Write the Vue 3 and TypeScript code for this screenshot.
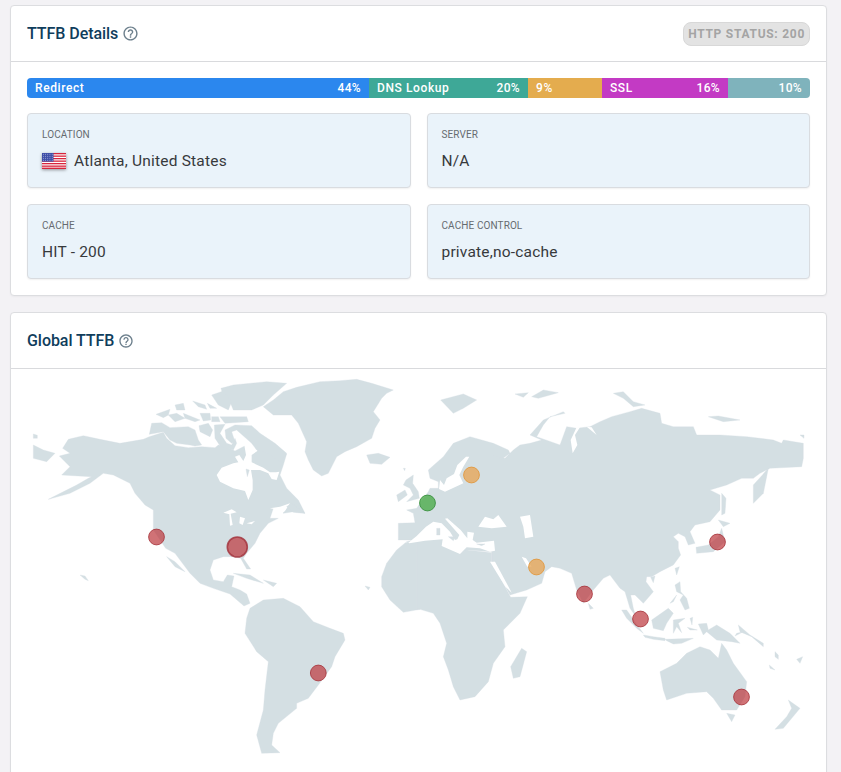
<template>
  <div class="page">
    <section class="card">
      <header class="card-head">
        <div class="card-title">
          <h2>TTFB Details</h2>
          <svg class="help" viewBox="0 0 24 24"><path :d="helpPath" /></svg>
        </div>
        <span class="status">HTTP STATUS: 200</span>
      </header>
      <div class="details">
        <div class="bar">
          <div
            v-for="seg in segments"
            :key="seg.color"
            class="seg"
            :style="{ width: seg.width + 'px', background: seg.color }"
          >
            <span class="seg-label">{{ seg.label }}</span>
            <span v-if="seg.right">{{ seg.right }}</span>
          </div>
        </div>
        <div class="info-grid">
          <div class="info">
            <div class="info-label">LOCATION</div>
            <div class="info-value">
              <svg class="flag" viewBox="0 0 25 16" preserveAspectRatio="none">
                <rect width="25" height="16" fill="#fff" />
                <rect v-for="y in [0, 2.5, 5, 7.5, 10, 12.5]" :key="y" x="0" :y="y" width="25" height="1.3" fill="#d8253c" />
                <rect x="0" y="14.6" width="25" height="1.4" fill="#d8253c" />
                <rect width="12" height="8.6" fill="#3f4fa8" />
                <circle v-for="s in flagStars" :key="s[0] + '-' + s[1]" :cx="s[0]" :cy="s[1]" r="0.45" fill="#dfe3f5" />
              </svg>
              Atlanta, United States
            </div>
          </div>
          <div class="info">
            <div class="info-label">SERVER</div>
            <div class="info-value">N/A</div>
          </div>
          <div class="info">
            <div class="info-label">CACHE</div>
            <div class="info-value">HIT - 200</div>
          </div>
          <div class="info">
            <div class="info-label">CACHE CONTROL</div>
            <div class="info-value">private,no-cache</div>
          </div>
        </div>
      </div>
    </section>

    <section class="card card-map">
      <header class="card-head">
        <div class="card-title">
          <h2>Global TTFB</h2>
          <svg class="help help-small" viewBox="0 0 24 24"><path :d="helpPath" /></svg>
        </div>
      </header>
      <svg class="map" viewBox="11 369 815 403" width="815" height="403">
        <g v-for="layer in layers" :key="layer.at" :transform="`translate(${layer.at}) scale(0.33333)`">
          <polygon v-for="p in layer.land" :key="p" :points="p" class="land" />
          <polygon v-for="p in layer.seas" :key="p" :points="p" class="sea" />
          <polygon v-for="p in layer.isles" :key="p" :points="p" class="land" />
        </g>
        <circle
          v-for="m in markers"
          :key="m.x"
          :cx="m.x"
          :cy="m.y"
          :r="m.r"
          :fill="m.fill"
          :stroke="m.stroke"
          :stroke-width="m.sw"
        />
      </svg>
    </section>
  </div>
</template>

<script setup lang="ts">
const helpPath =
  'M11 18h2v-2h-2v2zm1-16C6.48 2 2 6.48 2 12s4.48 10 10 10 10-4.48 10-10S17.52 2 12 2zm0 18c-4.41 0-8-3.59-8-8s3.59-8 8-8 8 3.59 8 8-3.59 8-8 8zm0-14c-2.21 0-4 1.79-4 4h2c0-1.1.9-2 2-2s2 .9 2 2c0 2-3 1.75-3 5h2c0-2.25 3-2.5 3-5 0-2.21-1.79-4-4-4z'

const segments = [
  { label: 'Redirect', right: '44%', width: 342, color: '#2b87ee' },
  { label: 'DNS Lookup', right: '20%', width: 159, color: '#3ea897' },
  { label: '9%', right: '', width: 74, color: '#e4ac4e' },
  { label: 'SSL', right: '16%', width: 126, color: '#c33ac4' },
  { label: '', right: '10%', width: 82, color: '#7fb3bc' }
]

const flagStars: number[][] = []
for (let row = 0; row < 4; row++) {
  for (let col = 0; col < 5; col++) {
    flagStars.push([1.4 + col * 2.3, 1.3 + row * 2])
  }
}

// map outlines traced from the reference, each layer in 3x crop coordinates
const layers = [
  {
    at: '20 370',
    land: [
      '118,258 150,250 128,235 145,208 190,197 240,208 300,220 370,208 388,200 430,187 440,205 465,227 505,233 545,230 585,233 595,225 620,230 645,243 680,225 760,240 800,252 790,285 780,315 800,355 835,390 840,400 855,430 820,425 790,430 780,415 760,415 750,445 775,445 745,460 720,490 705,520 680,550 670,565 692,597 680,597 662,565 640,560 610,560 580,570 570,600 580,630 610,635 622,615 642,618 635,650 660,660 680,672 690,700 672,708 630,672 580,655 540,640 510,610 465,550 437,535 400,480 400,420 375,405 345,370 330,340 280,315 250,310 210,340 150,370 85,388 170,345 205,325 215,320 175,318 125,315 150,290',
      '40,225 70,240 105,250 80,275 40,265',
      '40,192 52,196 52,205 40,205',
      '730,110 760,90 790,65 830,52 900,35 960,32 1010,28 1055,40 1120,60 1100,70 1085,85 1060,125 1080,150 1065,175 1055,205 1010,230 975,245 950,260 925,310 905,318 880,300 865,270 855,245 860,215 835,160 815,135 760,135',
      '1040,255 1075,250 1110,262 1085,283 1050,280',
      '680,745 690,715 730,690 790,685 840,710 880,755 930,775 970,790 975,810 945,860 935,890 895,945 865,985 830,1000 830,1015 775,1060 760,1090 755,1125 780,1148 725,1150 710,1095 730,1020 735,960 745,875 710,845 675,790',
      '1200,505 1160,515 1130,540 1100,580 1085,620 1085,650 1110,690 1150,727 1200,718'
    ],
    seas: [],
    isles: [
      '640,610 690,615 730,640 680,625',
      '730,630 770,640 760,650',
      '440,560 465,590 495,605 465,575',
      '1035,648 1050,652 1045,660',
      '180,615 195,618 205,632 195,628'
    ]
  },
  {
    at: '420 370',
    land: [
      '-65,510 -65,460 -15,458 -20,430 -40,420 -10,415 0,400 25,365 30,355 55,355 55,335 30,325 25,300 70,260 100,220 150,200 220,220 265,240 270,250 245,268 215,255 255,265 280,240 300,225 330,220 365,210 330,195 370,150 430,125 435,130 390,140 370,165 350,200 420,225 440,170 470,175 510,170 540,155 575,140 630,125 665,115 720,130 725,160 760,170 820,170 830,195 900,195 980,200 1060,210 1085,220 1090,210 1150,220 1150,265 1145,290 1050,295 1020,310 1000,325 965,325 920,345 870,360 900,375 900,420 870,455 825,465 810,485 825,520 805,525 795,500 775,490 760,500 775,515 775,535 782,555 760,585 720,605 695,620 680,620 678,635 700,665 670,700 645,675 632,675 640,715 648,740 630,715 615,665 600,655 570,615 550,625 520,660 490,700 470,660 455,610 420,595 395,590 375,605 365,640 320,660 270,675 215,575 215,545 145,540 120,550 70,520 0,510',
      '0,505 50,505 70,520 120,550 140,540 215,548 215,575 272,682 322,680 300,730 250,780 255,830 220,880 205,935 165,980 120,990 100,950 85,900 70,860 80,820 60,760 40,730 0,718 -10,718 -10,505'
    ],
    seas: [
      '300,440 330,435 340,500 315,505 310,470',
      '210,575 225,575 275,668 256,650',
      '305,560 318,565 335,590 322,590',
      '458,250 472,225 465,195 480,172 470,172 452,210',
      '500,170 530,195 515,172'
    ],
    isles: [
      '305,835 320,845 300,920 280,925 272,890',
      '62,90 130,72 170,90 130,115 100,130',
      '285,72 325,68 310,82',
      '335,80 370,60 415,68 355,85',
      '580,70 610,65 640,95 675,105 640,110 610,85',
      '865,140 895,138 960,150 910,155',
      '1000,400 1000,345 1045,295 1040,320 1030,370',
      '905,370 918,385 915,430 905,435',
      '505,700 520,715 510,718',
      '720,905 770,880 800,850 840,830 870,840 895,865 905,820 920,840 940,880 980,935 975,980 950,1020 905,1020 880,985 860,965 800,970 740,990 730,960',
      '920,1030 945,1035 935,1055',
      '1105,990 1140,1015 1090,1075 1065,1078 1100,1040 1115,1015',
      '1140,195 1152,195 1152,205'
    ]
  },
  {
    // canadian arctic and hudson bay
    at: '120 375',
    land: [],
    seas: [
      '290,300 305,278 340,265 355,262 345,245 358,240 370,258 378,240 372,205 395,208 412,208 412,228 395,240 395,262 430,278 450,292 468,292 478,290 470,315 455,312 445,295 420,285 393,285 398,315 398,345 385,375 375,348 340,340 300,320',
      '310,413 335,403 350,412 332,416 338,450 330,452 328,418',
      '360,425 375,430 368,450 358,445',
      '380,445 405,438 395,448',
      '450,400 480,395 510,385 495,408 475,425 480,405'
    ],
    isles: [
      '378,282 388,285 382,305',
      '88,178 95,145 125,143 150,158 205,155 225,165 235,195 245,210 225,213 210,210 170,205 150,195 130,170',
      '237,152 265,145 278,165 270,185 240,170',
      '283,150 315,148 300,175 320,205 335,210 345,190 350,205 340,225 300,212 285,190',
      '315,165 345,150 395,152 420,175 465,205 500,235 480,262 445,235 410,225 395,205 350,165 335,170 345,200 335,205 318,190',
      '303,40 340,30 440,20 500,25 460,60 430,90 395,105 340,105 330,80 310,65',
      '275,60 310,48 335,80 325,105 295,90',
      '218,78 255,90 260,103 235,95',
      '165,90 190,85 195,105 170,105',
      '108,118 150,103 145,120 130,128',
      '145,120 170,115 195,130 165,140',
      '190,115 240,135 225,140 195,130',
      '240,115 270,115 272,135 250,138',
      '275,125 295,125 300,140 275,140',
      '300,125 380,125 385,140 315,145',
      '262,85 290,100 270,100',
      '500,395 515,385 555,415 520,412'
    ]
  },
  {
    // europe and the mediterranean
    at: '370 420',
    land: [],
    seas: [
      '207,207 225,215 280,190 268,165 280,140 298,110 288,110 262,135 252,162 230,175 222,195 210,180',
      '325,320 345,290 370,298 385,285 410,320 365,325',
      '85,362 115,368 140,348 168,320 190,305 215,310 240,335 255,360 262,358 268,345 225,296 232,295 272,330 292,355 292,335 312,338 308,360 320,368 372,362 375,392 360,395 330,385 290,382 270,402 215,378 218,358 165,362 118,370 100,362'
    ],
    isles: [
      '108,180 130,165 128,190 145,215 148,235 110,245 130,225 120,205 100,195',
      '80,225 105,210 112,225 85,245',
      '100,145 106,145 104,152',
      '200,325 210,325 210,345 200,345',
      '235,350 256,350 250,362',
      '320,372 345,372 335,377'
    ]
  },
  {
    // south east asia and the pacific
    at: '610 520',
    land: [],
    seas: [],
    isles: [
      '35,270 50,270 85,320 100,340 80,325 50,295',
      '100,345 130,350 165,355 165,362 130,358 105,352',
      '165,358 250,355 215,370 190,372 170,362',
      '125,300 175,265 190,280 170,310 160,332 130,325',
      '190,300 225,295 205,310 215,338 200,320 190,340',
      '240,295 248,292 246,315',
      '232,322 262,330 240,330',
      '195,195 210,185 212,215 230,235 238,265 225,270 210,240 220,225 200,215',
      '180,250 200,225 190,245',
      '195,145 208,140 200,165',
      '122,172 135,168 130,188',
      '265,312 290,310 295,330 320,315 360,340 390,370 365,365 320,360 290,335 280,345',
      '385,315 420,345 460,370 460,380 425,350 390,335',
      '380,340 400,335 375,348',
      '495,395 505,405 505,418 495,410',
      '478,435 495,450 480,445',
      '560,418 578,410 570,430',
      '325,0 360,10 340,20',
      '335,25 345,65 310,95 260,100 258,82 295,75 325,50'
    ]
  }
]

const red = { fill: 'rgba(190, 60, 65, 0.72)', stroke: 'rgba(165, 50, 58, 0.8)', sw: 1 }
const orange = { fill: 'rgba(232, 163, 80, 0.75)', stroke: 'rgba(225, 150, 60, 0.85)', sw: 1 }
const green = { fill: 'rgba(85, 175, 85, 0.85)', stroke: 'rgba(60, 145, 65, 0.9)', sw: 1 }

const markers = [
  { x: 156.5, y: 537, r: 7.9, ...red },
  { x: 237.3, y: 547, r: 10, ...red, stroke: 'rgba(160, 45, 55, 0.8)', sw: 1.6 },
  { x: 318.3, y: 673, r: 7.9, ...red },
  { x: 427.5, y: 503, r: 7.9, ...green },
  { x: 471.5, y: 475, r: 7.9, ...orange },
  { x: 536.5, y: 567, r: 7.9, ...orange },
  { x: 584.5, y: 594, r: 7.9, ...red },
  { x: 640.5, y: 619, r: 7.9, ...red },
  { x: 717.5, y: 542, r: 7.9, ...red },
  { x: 741.5, y: 697, r: 7.9, ...red }
]
</script>

<style>
html,
body {
  margin: 0;
  height: 772px;
  overflow: hidden;
  background: #f3f2f5;
}
</style>

<style scoped>
.page {
  display: flex;
  flex-direction: column;
  gap: 16px;
  padding: 5px 14px 0 10px;
  font-family: Roboto, 'Liberation Sans', sans-serif;
}

.card {
  background: #fff;
  border: 1px solid #dcdde0;
  border-radius: 4px;
  box-shadow: 0 1px 2px rgba(0, 0, 0, 0.04);
}

.card-map {
  height: 470px;
}

.card-head {
  display: flex;
  align-items: center;
  justify-content: space-between;
  height: 55px;
  padding: 0 16px;
  border-bottom: 1px solid #d9dadd;
}

.card-title {
  display: flex;
  align-items: center;
  gap: 4px;
}

.card-title h2 {
  margin: 0;
  font-size: 16px;
  font-weight: 500;
  letter-spacing: -0.05px;
  color: #0f3d5c;
}

.help {
  width: 17px;
  height: 17px;
  fill: #6c7f8c;
}

.help-small {
  width: 16px;
  height: 16px;
}

.status {
  padding: 2px 4px;
  height: 18px;
  line-height: 18px;
  border: 1px solid #d8d8d8;
  border-radius: 8px;
  background: #e3e3e3;
  color: #a4a4a4;
  font-size: 12px;
  font-weight: 700;
  letter-spacing: 0.72px;
}

.details {
  padding: 16px;
}

.bar {
  display: flex;
  height: 20px;
  border-radius: 4px;
  overflow: hidden;
}

.seg {
  display: flex;
  align-items: center;
  justify-content: space-between;
  box-sizing: border-box;
  padding: 0 8px;
  color: #fff;
  font-size: 12px;
  font-weight: 500;
  letter-spacing: 0.35px;
}

.seg-label {
  letter-spacing: 0.6px;
}

.info-grid {
  display: grid;
  grid-template-columns: 1fr 1fr;
  column-gap: 16px;
  row-gap: 16px;
  margin-top: 15px;
}

.info {
  box-sizing: border-box;
  height: 75px;
  padding: 15px 14px;
  background: #eaf3fa;
  border: 1px solid #d9dce0;
  border-radius: 4px;
  box-shadow: 0 1px 2px rgba(0, 0, 0, 0.06);
}

.info-label {
  font-size: 10px;
  line-height: 12px;
  letter-spacing: 0.1px;
  color: #666b70;
}

.info-value {
  display: flex;
  align-items: center;
  gap: 8px;
  margin-top: 10px;
  font-size: 15.5px;
  line-height: 20px;
  letter-spacing: 0.2px;
  color: #37393c;
}

.flag {
  width: 24px;
  height: 16px;
  box-shadow: 0 1px 3px rgba(0, 0, 0, 0.4);
}

.map {
  display: block;
}

.land {
  fill: #d4dfe3;
  stroke: #d4dfe3;
  stroke-width: 1;
  stroke-linejoin: round;
}

.sea {
  fill: #fff;
}
</style>
